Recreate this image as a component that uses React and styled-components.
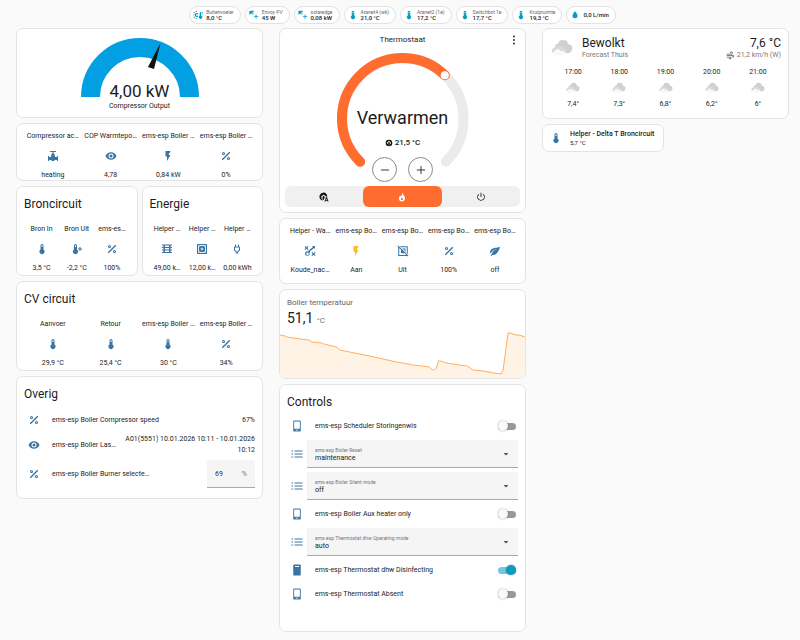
import React, { useState } from "react";
import styled, { createGlobalStyle } from "styled-components";

const ICONS = {
  thermometer:
    "M15 13V5A3 3 0 0 0 9 5V13A5 5 0 1 0 15 13M12 4A1 1 0 0 1 13 5V8H11V5A1 1 0 0 1 12 4Z",
  thermometerPlus:
    "M12 13V5A3 3 0 0 0 6 5V13A5 5 0 1 0 12 13M9 4A1 1 0 0 1 10 5V8H8V5A1 1 0 0 1 9 4M17 8H19V11H22V13H19V16H17V13H14V11H17Z",
  percent:
    "M18.5 3.5L20.5 5.5L5.5 20.5L3.5 18.5ZM7 4A3 3 0 1 0 7 10A3 3 0 1 0 7 4M7 6A1 1 0 1 1 7 8A1 1 0 1 1 7 6M17 14A3 3 0 1 0 17 20A3 3 0 1 0 17 14M17 16A1 1 0 1 1 17 18A1 1 0 1 1 17 16Z",
  eye: "M12 9A3 3 0 1 0 12 15A3 3 0 1 0 12 9M12 17A5 5 0 1 1 12 7A5 5 0 1 1 12 17M12 4.5C7 4.5 2.73 7.61 1 12C2.73 16.39 7 19.5 12 19.5C17 19.5 21.27 16.39 23 12C21.27 7.61 17 4.5 12 4.5Z",
  flash: "M7 2V13H10V22L17 10H13L17 2H7Z",
  valve:
    "M6 2H18V4H13V7H15V11H16V14H20V12H22V22H20V20H16C15 21.5 13.7 22 12 22S9 21.5 8 20H4V22H2V12H4V14H8V11H9V7H11V4H6Z",
  coil: "M2 3H22V5H2ZM5 5H8V8H5ZM16 5H19V8H16ZM2 8H22V10H2ZM5 10H8V13H5ZM16 10H19V13H16ZM2 13H22V15H2ZM5 15H8V18H5ZM16 15H19V18H16ZM2 18H22V20H2Z",
  heatPump:
    "M3 2H21A1 1 0 0 1 22 3V21A1 1 0 0 1 21 22H3A1 1 0 0 1 2 21V3A1 1 0 0 1 3 2M4 4V20H20V4ZM12 5.5A6.5 6.5 0 1 0 12 18.5A6.5 6.5 0 1 0 12 5.5M12 8L13 11L16 12L13 13L12 16L11 13L8 12L11 11ZM5 5H8L5 8ZM19 5V8L16 5ZM5 19V16L8 19ZM19 19H16L19 16Z",
  plug: "M16 7V3H14V7H10V3H8V7C7 7 6 8 6 9V14.5L9.5 18V21H14.5V18L18 14.5V9C18 8 17 7 16 7M16 13.67L12.5 17.17V19H11.5V17.17L8 13.67V9H16V13.67Z",
  strategy:
    "M2.5 2L5 4.5L7.5 2L9 3.5L6.5 6L9 8.5L7.5 10L5 7.5L2.5 10L1 8.5L3.5 6L1 3.5ZM16 2H22V8L20 6C17 9 14 10 12 13L11 16A4.5 4.5 0 1 1 8 12.8C10 10 15 7 18 4ZM7 15A2.5 2.5 0 1 0 7 20A2.5 2.5 0 1 0 7 15M16.5 14L19 16.5L21.5 14L23 15.5L20.5 18L23 20.5L21.5 22L19 19.5L16.5 22L15 20.5L17.5 18L15 15.5Z",
  squareOff:
    "M1 2.3L2.3 1L23 21.7L21.7 23L20.5 21.8H2.5V3.8ZM4.5 6V20H18.5L15 16.5H8V9.5ZM5.5 2.5H21.5V18.5L19.5 16.5V4.5H7.5ZM10 7H17V14L15 12V9H12Z",
  leaf: "M17 8C8 10 5.9 16.17 3.82 21.34L5.71 22L6.66 19.7C7.14 19.87 7.64 20 8 20C19 20 22 3 22 3C21 5 14 5.25 9 6.25C4 7.25 2 11.5 2 13.5C2 15.5 3.75 17.25 3.75 17.25C7 8 17 8 17 8Z",
  list: "M7 5H23V7H7ZM7 11H23V13H7ZM7 17H23V19H7ZM1 4.8H4V7.2H1ZM1 10.8H4V13.2H1ZM1 16.8H4V19.2H1Z",
  switchOff:
    "M6 1H18A1.5 1.5 0 0 1 19.5 2.5V21.5A1.5 1.5 0 0 1 18 23H6A1.5 1.5 0 0 1 4.5 21.5V2.5A1.5 1.5 0 0 1 6 1M6.3 3V17.5H17.7V3ZM9.5 19.5V21H14.5V19.5Z",
  switchOn:
    "M6 1H18A1.5 1.5 0 0 1 19.5 2.5V21.5A1.5 1.5 0 0 1 18 23H6A1.5 1.5 0 0 1 4.5 21.5V2.5A1.5 1.5 0 0 1 6 1M8 4V6H16V4Z",
  solar:
    "M1 2H12L9 7L7 6L6 11L4 9L1 12ZM9 8L12 8L10 11L8 11ZM16 11H18V15H22V17H18V21H16V17H12V15H16Z",
  sunThermometer:
    "M20 14V7A2 2 0 0 0 16 7V14A4 4 0 1 0 20 14M9 7A5 5 0 0 0 9 17L12 16V14H9A2 2 0 0 1 9 10H12V8ZM8 2L10 5H6ZM8 22L6 19H10ZM1 5L5 6L3 9ZM1 19L3 15L5 18ZM0 12L2 10V14ZM22 5H24V7H22ZM22 9H24V11H22Z",
  drop: "M12 20A6 6 0 0 1 6 14C6 10 12 3.25 12 3.25S18 10 18 14A6 6 0 0 1 12 20Z",
  fire: "M12 1C13 5 18 8 19 13C20 19 16 23 12 23C7 23 4 19 5 14C5.5 11 7 9 8 8C8 10 9 11 10 11C12 9 12 5 12 1M12 13C10 15 9.5 16 9.5 17.5A2.5 2.5 0 0 0 14.5 17.5C14.5 16 13 15 12 13Z",
  power:
    "M11 2H13V12H11ZM6 5L7.5 6.5A7 7 0 1 0 16.5 6.5L18 5A9 9 0 1 1 6 5Z",
  dots: "M12 3A2 2 0 1 0 12 7A2 2 0 1 0 12 3M12 10A2 2 0 1 0 12 14A2 2 0 1 0 12 10M12 17A2 2 0 1 0 12 21A2 2 0 1 0 12 17Z",
  minus: "M5 11.2H19V12.8H5Z",
  plus: "M11.2 5H12.8V11.2H19V12.8H12.8V19H11.2V12.8H5V11.2H11.2Z",
  homeTemp:
    "M12 2A10 10 0 1 0 12 22A10 10 0 1 0 12 2M12 5L19 11H17V16H14L15 19H9L10 15H7V12H5ZM12 8A2 2 0 0 0 10 10V13A3 3 0 1 0 14 13V10A2 2 0 0 0 12 8Z",
  homeAuto:
    "M11 1A10 10 0 0 0 4 18L8 21V18L6 16V12H4L11 6L17 11H20C20 5 16 1 11 1M11 9A2 2 0 0 0 9 11V14A3 3 0 0 0 11 19L14 12ZM17 12H19L23 23H20.5L20 21H16L15.5 23H13ZM18 15L16.8 19H19.2Z",
  wind: "M2 7H14A2 2 0 1 0 12 5H10A4 4 0 1 1 14 9H2ZM2 11H19A3 3 0 1 1 16 14H18A1 1 0 1 0 19 13H2ZM2 15H11A3.5 3.5 0 1 1 7.5 18.5H9.5A1.5 1.5 0 1 0 11 17H2Z",
  caret: "M7 10L12 15L17 10Z",
};

function Icon({ name, size = 12, color = "#3874a4" }) {
  return (
    <svg width={size} height={size} viewBox="0 0 24 24" aria-hidden="true">
      <path d={ICONS[name]} fill={color} fillRule="evenodd" />
    </svg>
  );
}

function Cloud({ size }) {
  return (
    <svg width={size} height={size} viewBox="0 0 24 24" aria-hidden="true">
      <path
        d="M5 14C3 10 6 7 8 7.5C8 4 11 2.5 14 3.5C17 3 18.5 5 18.5 8C22 8 24 10.5 23 14C22 17 20 18 16 17.5Z"
        fill="#d0d0d0"
      />
      <path
        d="M1 17A4.5 4.5 0 0 1 6 11C8 8.5 12 9 13 12C16 12 17 15 16.5 17Z"
        fill="#dadada"
      />
      <path
        d="M4 20A3 3 0 0 1 4.5 15C6 12.5 10 13 11 15.5C14 14.5 16 16 16 18C16 19.5 15 20 13 20Z"
        fill="#f8f8f8"
      />
    </svg>
  );
}

const badges = [
  { icon: "sunThermometer", name: "Buitenvoeler", value: "8,0 °C" },
  { icon: "solar", name: "Envoy PV", value: "45 W" },
  { icon: "solar", name: "solaredge", value: "0,08 kW" },
  { icon: "thermometer", name: "Aranet4 (wk)", value: "21,0 °C" },
  { icon: "thermometer", name: "Aranet2 (1e)", value: "17,2 °C" },
  { icon: "thermometer", name: "Switchbot 1e", value: "17,7 °C" },
  { icon: "thermometer", name: "Kruipruimte", value: "19,3 °C" },
  { icon: "drop", value: "0,0 L/min" },
];

const compressor = [
  ["Compressor ac…", "valve", "heating"],
  ["COP Warmtepo…", "eye", "4,78"],
  ["ems-esp Boiler …", "flash", "0,84 kW"],
  ["ems-esp Boiler …", "percent", "0%"],
];

const source = [
  ["Bron In", "thermometer", "3,5 °C"],
  ["Bron Uit", "thermometerPlus", "-2,2 °C"],
  ["ems-es…", "percent", "100%"],
];

const energy = [
  ["Helper …", "coil", "49,00 k…"],
  ["Helper …", "heatPump", "12,00 k…"],
  ["Helper …", "plug", "0,00 kWh"],
];

const circuit = [
  ["Aanvoer", "thermometer", "29,9 °C"],
  ["Retour", "thermometer", "25,4 °C"],
  ["ems-esp Boiler …", "thermometer", "30 °C"],
  ["ems-esp Boiler …", "percent", "34%"],
];

const status = [
  ["Helper - Wa…", "strategy", "Koude_nac…"],
  ["ems-esp Bo…", "flash", "Aan", "#fbb92c"],
  ["ems-esp Bo…", "squareOff", "Uit"],
  ["ems-esp Bo…", "percent", "100%"],
  ["ems-esp Bo…", "leaf", "off"],
];

const forecast = [
  ["17:00", "7,4°"],
  ["18:00", "7,3°"],
  ["19:00", "6,8°"],
  ["20:00", "6,2°"],
  ["21:00", "6°"],
];

const history = [
  [0, 5], [5, 6], [7, 7], [20, 9], [29, 10], [32, 12], [42, 13], [44, 14],
  [57, 17], [60, 20], [70, 22], [90, 26], [117, 32], [134, 35], [150, 37],
  [153, 40], [155, 40], [157, 38], [159, 31], [161, 31], [167, 33], [180, 35],
  [188, 36], [194, 40], [204, 41], [215, 43], [222, 44], [224, 40], [229, 3],
  [231, 3], [237, 5], [240, 5], [246, 7],
];

function Glance({ items }) {
  return (
    <GlanceRow>
      {items.map(([name, icon, value, color], i) => (
        <GlanceItem key={i}>
          <span>{name}</span>
          <Icon name={icon} color={color} />
          <span>{value}</span>
        </GlanceItem>
      ))}
    </GlanceRow>
  );
}

function Gauge() {
  return (
    <GaugeCard>
      <Stack>
        <svg width="118" height="59" viewBox="0 0 118 59" aria-hidden="true">
          <path d="M9.5 59A49.5 49.5 0 0 1 108.5 59" fill="none" stroke="#039fe3" strokeWidth="19" />
          <path d="M79.5 5L73 31L67 29Z" fill="#111" />
        </svg>
        <GaugeValue>4,00 kW</GaugeValue>
      </Stack>
      <GaugeName>Compressor Output</GaugeName>
    </GaugeCard>
  );
}

function Thermostat() {
  const [mode, setMode] = useState("heat");
  const modes = [
    ["auto", "homeAuto", "Automatisch"],
    ["heat", "fire", "Verwarmen"],
    ["off", "power", "Uit"],
  ];
  return (
    <ThermostatCard>
      <ThermostatHeader>
        <span>Thermostaat</span>
        <MenuButton type="button" aria-label="Meer">
          <Icon name="dots" color="#333" />
        </MenuButton>
      </ThermostatHeader>
      <Stack>
        <svg width="132" height="132" viewBox="0 0 132 132" aria-hidden="true">
          <g fill="none" strokeWidth="10" strokeLinecap="round">
            <path d="M23.2 108.8A60.5 60.5 0 1 1 108.8 108.8" stroke="#ebebeb" />
            <path d="M23.2 108.8A60.5 60.5 0 0 1 107.8 22.2" stroke="#ff6d2e" />
          </g>
          <circle cx="107.8" cy="22.2" r="4" fill="#fff" />
        </svg>
        <DialContent>
          <DialState>Verwarmen</DialState>
          <DialTemp>
            <Icon name="homeTemp" size={8} color="#111" />
            21,5 °C
          </DialTemp>
          <DialButtons>
            <RoundButton type="button" aria-label="Lager">
              <Icon name="minus" size={14} color="#333" />
            </RoundButton>
            <RoundButton type="button" aria-label="Hoger">
              <Icon name="plus" size={14} color="#333" />
            </RoundButton>
          </DialButtons>
        </DialContent>
      </Stack>
      <ModeBar>
        {modes.map(([id, icon, label]) => (
          <ModeButton
            key={id}
            type="button"
            aria-label={label}
            $active={mode === id}
            onClick={() => setMode(id)}
          >
            <Icon name={icon} size={10} color={mode === id ? "#fff" : "#111"} />
          </ModeButton>
        ))}
      </ModeBar>
    </ThermostatCard>
  );
}

function BoilerGraph() {
  const line = history.map((p) => p.join(" ")).join("L");
  return (
    <GraphCard>
      <GraphInfo>
        <GraphName>Boiler temperatuur</GraphName>
        <GraphValue>
          51,1 <GraphUnit>°C</GraphUnit>
        </GraphValue>
      </GraphInfo>
      <GraphSvg viewBox="0 0 246 48" preserveAspectRatio="none" aria-hidden="true">
        <path d={`M${line}V48H0Z`} fill="#fff3e6" />
        <path d={`M${line}`} fill="none" stroke="#ffae5c" strokeLinejoin="round" />
      </GraphSvg>
    </GraphCard>
  );
}

function ToggleRow({ id, label, on = false }) {
  const [checked, setChecked] = useState(on);
  return (
    <Row>
      <Icon name={checked ? "switchOn" : "switchOff"} />
      <RowLabel htmlFor={id}>{label}</RowLabel>
      <Switch
        id={id}
        type="checkbox"
        checked={checked}
        onChange={() => setChecked(!checked)}
      />
    </Row>
  );
}

function SelectRow({ id, label, value }) {
  return (
    <Row>
      <Icon name="list" />
      <SelectField>
        <SelectLabel htmlFor={id}>{label}</SelectLabel>
        <Select id={id} defaultValue={value}>
          <option>{value}</option>
        </Select>
        <Caret>
          <Icon name="caret" color="#555" />
        </Caret>
      </SelectField>
    </Row>
  );
}

export default function App() {
  return (
    <Page>
      <GlobalStyle />
      <Badges>
        {badges.map((b, i) => (
          <Badge key={i}>
            <Icon name={b.icon} size={10} color="#0a9bc5" />
            <div>
              {b.name && <BadgeName>{b.name}</BadgeName>}
              <BadgeValue>{b.value}</BadgeValue>
            </div>
          </Badge>
        ))}
      </Badges>
      <Columns>
        <Column>
          <Gauge />
          <Card>
            <Glance items={compressor} />
          </Card>
          <Pair>
            <TitledCard>
              <CardTitle>Broncircuit</CardTitle>
              <Glance items={source} />
            </TitledCard>
            <TitledCard>
              <CardTitle>Energie</CardTitle>
              <Glance items={energy} />
            </TitledCard>
          </Pair>
          <TitledCard>
            <CardTitle>CV circuit</CardTitle>
            <Glance items={circuit} />
          </TitledCard>
          <OtherCard>
            <CardTitle>Overig</CardTitle>
            <Row>
              <Icon name="percent" />
              <RowName>ems-esp Boiler Compressor speed</RowName>
              <RowValue>67%</RowValue>
            </Row>
            <Row>
              <Icon name="eye" />
              <RowName>ems-esp Boiler Las…</RowName>
              <RowValue>A01(5551) 10.01.2026 10:11 - 10.01.2026 10:12</RowValue>
            </Row>
            <Row>
              <Icon name="percent" />
              <RowLabel htmlFor="burner">ems-esp Boiler Burner selecte…</RowLabel>
              <NumberField>
                <NumberInput id="burner" type="text" inputMode="numeric" defaultValue="69" />
                <span>%</span>
              </NumberField>
            </Row>
          </OtherCard>
        </Column>

        <Column>
          <Thermostat />
          <StatusCard>
            <Glance items={status} />
          </StatusCard>
          <BoilerGraph />
          <ControlsCard>
            <CardTitle>Controls</CardTitle>
            <ToggleRow id="scheduler" label="ems-esp Scheduler Storingenwis" />
            <SelectRow id="reset" label="ems-esp Boiler Reset" value="maintenance" />
            <SelectRow id="silent" label="ems-esp Boiler Silent mode" value="off" />
            <ToggleRow id="aux" label="ems-esp Boiler Aux heater only" />
            <SelectRow id="dhw" label="ems-esp Thermostat dhw Operating mode" value="auto" />
            <ToggleRow id="disinfect" label="ems-esp Thermostat dhw Disinfecting" on />
            <ToggleRow id="absent" label="ems-esp Thermostat Absent" />
          </ControlsCard>
        </Column>

        <Column>
          <WeatherCard>
            <WeatherTop>
              <Cloud size={22} />
              <WeatherText>
                <WeatherMain>Bewolkt</WeatherMain>
                <WeatherSub>Forecast Thuis</WeatherSub>
              </WeatherText>
              <WeatherText $end>
                <WeatherMain>7,6 °C</WeatherMain>
                <WeatherSub>
                  <Icon name="wind" size={9} color="#555" />
                  21,2 km/h (W)
                </WeatherSub>
              </WeatherText>
            </WeatherTop>
            <Forecast>
              {forecast.map(([time, temp]) => (
                <ForecastItem key={time}>
                  <span>{time}</span>
                  <Cloud size={14} />
                  <span>{temp}</span>
                </ForecastItem>
              ))}
            </Forecast>
          </WeatherCard>
          <Pair>
            <Tile>
              <Icon name="thermometer" />
              <div>
                <TileName>Helper - Delta T Broncircuit</TileName>
                <TileState>5,7 °C</TileState>
              </div>
            </Tile>
          </Pair>
        </Column>
      </Columns>
    </Page>
  );
}

const GlobalStyle = createGlobalStyle`
  * {
    box-sizing: border-box;
  }

  body {
    margin: 0;
    background-color: #fafafa;
    color: #1c1c1c;
    font-family: Roboto, "Liberation Sans", sans-serif;
    font-size: 7px;
    line-height: 10px;
  }

  svg {
    display: block;
    flex: none;
  }

  button, input, select {
    font: inherit;
    color: inherit;
  }
`;

const Page = styled.main`
  padding: 6px 11px 8px 16px;
`;

const Badges = styled.div`
  display: flex;
  justify-content: center;
  gap: 4px;
  margin-bottom: 4px;
`;

const Badge = styled.div`
  display: flex;
  align-items: center;
  gap: 3px;
  height: 18px;
  padding: 0 6px 0 3px;
  background-color: #fff;
  border: 1px solid #e2e2e2;
  border-radius: 9px;
  line-height: 6px;
  white-space: nowrap;
`;

const BadgeName = styled.div`
  color: #666;
  font-size: 5px;
  line-height: 5px;
`;

const BadgeValue = styled.div`
  font-size: 6px;
  font-weight: 500;
`;

const Columns = styled.div`
  display: grid;
  grid-template-columns: repeat(3, minmax(0, 1fr));
  align-items: start;
  gap: 16px;
`;

const Column = styled.div`
  display: flex;
  flex-direction: column;
  gap: 5px;
`;

const Pair = styled.div`
  display: grid;
  grid-template-columns: repeat(2, minmax(0, 1fr));
  gap: 4px;
`;

const Card = styled.section`
  padding: 7px 7px 0;
  background-color: #fff;
  border: 1px solid #e4e4e4;
  border-radius: 7px;
`;

const TitledCard = styled(Card)`
  padding-bottom: 2px;
`;

const CardTitle = styled.h2`
  margin: 2px 0 12px;
  font-size: 12px;
  font-weight: 400;
  line-height: 16px;
`;

const GlanceRow = styled.div`
  display: flex;
`;

const GlanceItem = styled.div`
  flex: 1;
  min-width: 0;
  display: flex;
  flex-direction: column;
  align-items: center;
  white-space: nowrap;

  > svg {
    margin: 9px 0 8px;
  }
`;

const Stack = styled.div`
  display: grid;
  justify-items: center;

  > * {
    grid-area: 1 / 1;
  }
`;

const GaugeCard = styled(Card)`
  padding: 9px 7px 6px;
  text-align: center;
`;

const GaugeValue = styled.div`
  align-self: end;
  font-size: 17px;
  line-height: 12px;
`;

const GaugeName = styled.div`
  margin-top: 4px;
`;

const ThermostatCard = styled(Card)`
  padding: 5px;
`;

const ThermostatHeader = styled.header`
  display: grid;
  grid-template-columns: 1fr auto 1fr;
  align-items: center;
  height: 12px;
  margin-bottom: 7px;
  font-size: 8px;

  > span {
    grid-column: 2;
  }
`;

const MenuButton = styled.button`
  justify-self: end;
  padding: 0;
  border: none;
  background: none;
  cursor: pointer;
`;

const DialContent = styled.div`
  display: flex;
  flex-direction: column;
  align-items: center;
  padding-top: 54px;
`;

const DialState = styled.div`
  font-size: 18px;
  line-height: 22px;
`;

const DialTemp = styled.div`
  display: flex;
  align-items: center;
  gap: 2px;
  margin-top: 9px;
  font-size: 8px;
  font-weight: 500;
`;

const DialButtons = styled.div`
  display: flex;
  gap: 11px;
  margin-top: 9px;
`;

const RoundButton = styled.button`
  display: flex;
  align-items: center;
  justify-content: center;
  width: 25px;
  height: 25px;
  padding: 0;
  background: none;
  border: 1px solid #8a8a8a;
  border-radius: 50%;
  cursor: pointer;
`;

const ModeBar = styled.div`
  display: grid;
  grid-template-columns: repeat(3, 1fr);
  margin-top: 1px;
  background-color: #f0f0f0;
  border-radius: 6px;
`;

const ModeButton = styled.button`
  display: flex;
  align-items: center;
  justify-content: center;
  height: 21px;
  padding: 0;
  border: none;
  border-radius: 6px;
  background-color: ${({ $active }) => ($active ? "#ff6d2e" : "transparent")};
  cursor: pointer;
`;

const StatusCard = styled(Card)`
  padding-bottom: 8px;
`;

const GraphCard = styled(Card)`
  padding: 0;
  overflow: hidden;
`;

const GraphInfo = styled.div`
  padding: 8px 7px 4px;
`;

const GraphName = styled.div`
  color: #666;
  font-size: 8px;
`;

const GraphValue = styled.div`
  margin-top: 2px;
  font-size: 14px;
  line-height: 16px;
`;

const GraphUnit = styled.span`
  color: #777;
  font-size: 8px;
  line-height: 8px;
`;

const GraphSvg = styled.svg`
  width: 100%;
  height: 48px;
`;

const OtherCard = styled(Card)`
  display: flex;
  flex-direction: column;
  gap: 4px;
  padding-bottom: 10px;

  ${CardTitle} {
    margin-bottom: 4px;
  }
`;

const ControlsCard = styled(OtherCard)`
  padding-bottom: 27px;

  ${CardTitle} {
    margin-bottom: 2px;
  }
`;

const Row = styled.div`
  display: flex;
  align-items: center;
  min-height: 20px;
  padding-left: 4px;
`;

const RowName = styled.div`
  flex: 1 0 auto;
  margin-left: 12px;
  white-space: nowrap;
`;

const RowLabel = styled.label`
  flex: 1;
  margin-left: 12px;
  white-space: nowrap;
`;

const RowValue = styled.div`
  margin-left: 8px;
  line-height: 11px;
  text-align: right;
`;

const NumberField = styled.div`
  display: flex;
  align-items: center;
  width: 48px;
  height: 28px;
  padding: 0 8px;
  background-color: #f5f5f5;
  border-bottom: 1px solid #aaa;
  color: #777;
`;

const NumberInput = styled.input`
  flex: 1;
  min-width: 0;
  padding: 0;
  border: none;
  background: none;
  color: #333;
`;

const SelectField = styled.div`
  position: relative;
  flex: 1;
  height: 28px;
  margin-left: 4px;
  padding: 7px 8px 0;
  background-color: #f5f5f5;
  border-bottom: 1px solid #aaa;
`;

const SelectLabel = styled.label`
  display: block;
  color: #777;
  font-size: 5px;
  line-height: 6px;
`;

const Select = styled.select`
  display: block;
  width: 100%;
  height: 10px;
  padding: 0;
  border: none;
  background: none;
  appearance: none;
  cursor: pointer;
`;

const Caret = styled.span`
  position: absolute;
  top: 8px;
  right: 6px;
  pointer-events: none;
`;

const Switch = styled.input`
  display: flex;
  align-items: center;
  width: 18px;
  height: 7px;
  margin: 0 2px 0 0;
  appearance: none;
  border-radius: 4px;
  background-color: ${({ checked }) => (checked ? "#6fc8e0" : "#999")};
  cursor: pointer;

  &::before {
    content: "";
    flex: none;
    width: 10px;
    height: 10px;
    margin-left: ${({ checked }) => (checked ? "auto" : "0")};
    border-radius: 50%;
    background-color: ${({ checked }) => (checked ? "#0a9bc5" : "#fafafa")};
    box-shadow: 0 0 2px rgba(0, 0, 0, 0.4);
  }
`;

const WeatherCard = styled(Card)`
  padding-bottom: 9px;
`;

const WeatherTop = styled.div`
  display: flex;
  align-items: center;
  height: 24px;
  padding-left: 1px;
`;

const WeatherText = styled.div`
  display: flex;
  flex-direction: column;
  align-items: ${({ $end }) => ($end ? "flex-end" : "flex-start")};
  margin-left: ${({ $end }) => ($end ? "auto" : "9px")};
`;

const WeatherMain = styled.div`
  font-size: 12px;
  line-height: 14px;
`;

const WeatherSub = styled.div`
  display: flex;
  align-items: center;
  gap: 2px;
  color: #777;
`;

const Forecast = styled.div`
  display: flex;
  margin-top: 7px;
`;

const ForecastItem = styled.div`
  flex: 1;
  display: flex;
  flex-direction: column;
  align-items: center;
  gap: 4px;
`;

const Tile = styled(Card)`
  display: flex;
  align-items: center;
  gap: 8px;
  padding: 4px 7px;
  white-space: nowrap;
`;

const TileName = styled.div`
  font-weight: 500;
`;

const TileState = styled.div`
  font-size: 6px;
  line-height: 8px;
`;
